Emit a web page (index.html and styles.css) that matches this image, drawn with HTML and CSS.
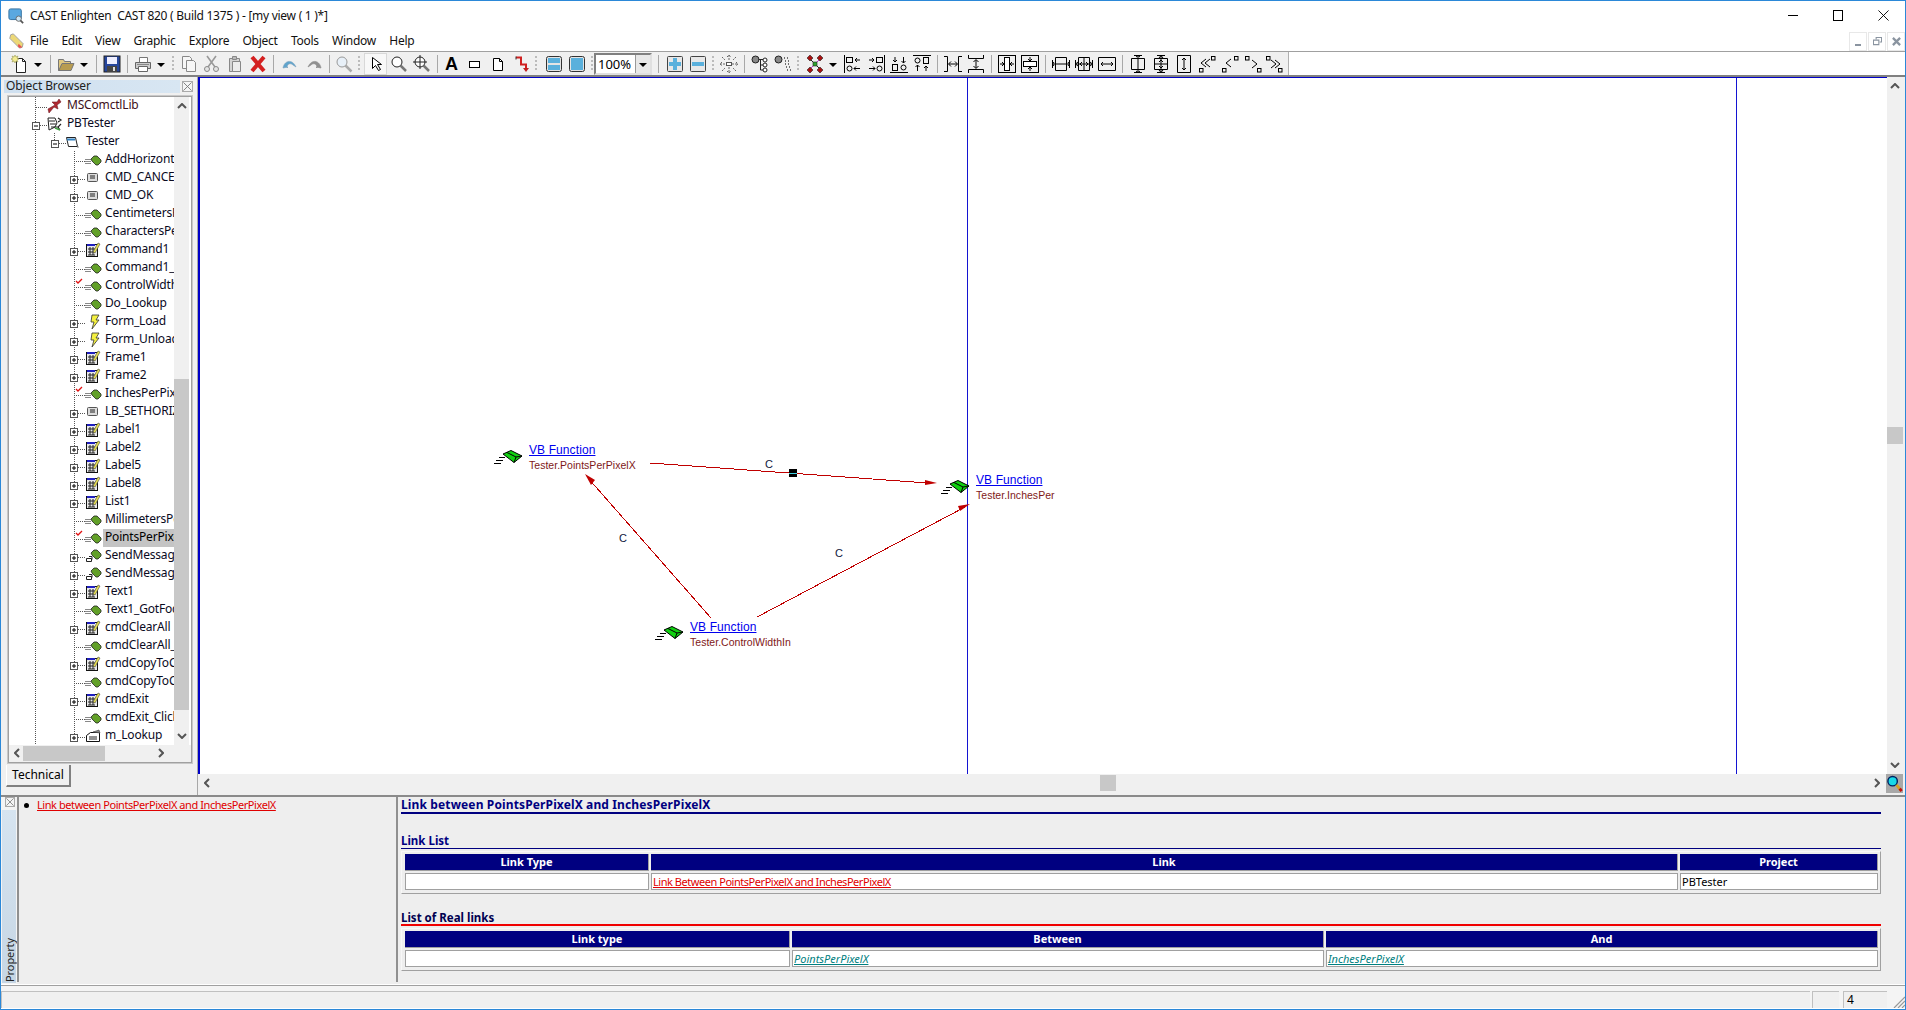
FILE: index.html
```html
<!DOCTYPE html>
<html lang="en">
<head>
<meta charset="utf-8">
<title>CAST Enlighten</title>
<link rel="stylesheet" href="styles.css">
</head>
<body>
<svg class="defs" aria-hidden="true">
  <defs>
    <!-- toolbar icons -->
    <symbol id="new" viewBox="0 0 18 18"><path d="M5.500 3.500h6l3 3v11h-9z" fill="#fff" stroke="#222"/><path d="M11.500 3.500v3h3" fill="none" stroke="#222"/><path d="M4 0l1 2 2-1-1 2 2 1-2 1 1 2-2-1-1 2-1-2-2 1 1-2-2-1 2-1-1-2 2 1z" fill="#f4ec90" stroke="#9a9a50" stroke-width=".6"/></symbol>
    <symbol id="open" viewBox="0 0 18 18"><path d="M1.500 4.500h5l1 2h6v2h-8l-3 7h-1z" fill="#e0c880" stroke="#777"/><path d="M5 8.500h12l-3 7H1.800z" fill="#b89c50" stroke="#777"/></symbol>
    <symbol id="save" viewBox="0 0 18 18"><rect x="1" y="1" width="16" height="16" fill="#26469c" stroke="#222"/><rect x="4" y="2" width="10" height="7" fill="#eef"/><rect x="4" y="11" width="10" height="6" fill="#444"/><rect x="10" y="12" width="2" height="4" fill="#ddd"/></symbol>
    <symbol id="print" viewBox="0 0 18 18"><path d="M5.500 2.500h8v5h-8z" fill="#fff" stroke="#777"/><path d="M1.500 7.500h15v6h-15z" fill="#ccc" stroke="#666"/><path d="M4.500 11.500h9v5h-9z" fill="#fff" stroke="#666"/><path d="M3 9.500h12" stroke="#888"/></symbol>
    <symbol id="copy" viewBox="0 0 18 18"><path d="M2.500 1.500h7l2 2v10h-9z" fill="#f6f6f6" stroke="#888"/><path d="M6.500 5.500h7l2 2v9h-9z" fill="#f6f6f6" stroke="#888"/></symbol>
    <symbol id="cut" viewBox="0 0 18 18"><path d="M4 1l8 11M13 1L5 12" stroke="#999" stroke-width="1.600" fill="none"/><circle cx="4" cy="14" r="2.500" fill="#e4e4e4" stroke="#888"/><circle cx="13" cy="14" r="2.500" fill="#e4e4e4" stroke="#888"/></symbol>
    <symbol id="paste" viewBox="0 0 18 18"><path d="M3.500 3.500h10v13h-10z" fill="#d4d4d4" stroke="#888"/><path d="M6.500 1.500h4v3h-4z" fill="#bbb" stroke="#888"/><path d="M6.500 6.500h8v10h-8z" fill="#ececec" stroke="#888"/></symbol>
    <symbol id="del" viewBox="0 0 18 18"><path d="M3 2l12 14M15 2L3 16" stroke="#d42020" stroke-width="4"/></symbol>
    <symbol id="undo" viewBox="0 0 18 18"><path d="M2 13C3 6 11 3 15 12l-3-2C10 8 6 8 6 13l1-1z" fill="#5fa4cc" stroke="#7aa0bc" stroke-width=".6"/></symbol>
    <symbol id="redo" viewBox="0 0 18 18"><path d="M16 13C15 6 7 3 3 12l3-2c2-2 6-2 6 3l-1-1z" fill="#909090" stroke="#888" stroke-width=".6"/></symbol>
    <symbol id="find" viewBox="0 0 18 18"><circle cx="7" cy="7" r="5" fill="#e8f0f8" stroke="#999"/><path d="M10.500 10.500l6 6" stroke="#aaa" stroke-width="2.500"/></symbol>
    <symbol id="arrow" viewBox="0 0 18 18"><path d="M5.500 2.500v11l3-3 3 5 2-1-3-5h4z" fill="#fff" stroke="#000"/></symbol>
    <symbol id="zoom" viewBox="0 0 18 18"><circle cx="7" cy="7" r="5" fill="#fff" stroke="#222"/><path d="M10.500 10.500l5.500 5.500" stroke="#777" stroke-width="2.500"/></symbol>
    <symbol id="zoomfit" viewBox="0 0 18 18"><circle cx="7" cy="7" r="5" fill="#fff" stroke="#222"/><path d="M7 0v14M0 7h14" stroke="#222"/><path d="M10.500 10.500l5.500 5.500" stroke="#777" stroke-width="2.500"/></symbol>
    <symbol id="rect" viewBox="0 0 18 18"><rect x="3.500" y="6.500" width="10" height="6" fill="#fff" stroke="#000"/></symbol>
    <symbol id="page" viewBox="0 0 18 18"><path d="M4.500 3.500h6l3 3v9h-9z" fill="#fff" stroke="#000"/><path d="M10.500 3.500v3h3" fill="none" stroke="#000"/></symbol>
    <symbol id="redlink" viewBox="0 0 18 18"><path d="M4 2.500h5v7h5v5" fill="none" stroke="#d02020" stroke-width="2"/><path d="M4 1.500v3" stroke="#333"/><path d="M11 13h6l-3 4z" fill="#c02020"/></symbol>
    <symbol id="bars" viewBox="0 0 18 18"><rect x="1.500" y="1.500" width="15" height="15" rx="2" fill="#e4e4e4" stroke="#333"/><rect x="3" y="3" width="12" height="5" fill="#5ab0dc"/><rect x="3" y="10" width="12" height="5" fill="#5ab0dc"/></symbol>
    <symbol id="blue" viewBox="0 0 18 18"><rect x="1.500" y="1.500" width="15" height="15" rx="2" fill="#e4e4e4" stroke="#333"/><rect x="3" y="3" width="12" height="12" fill="#5ab0dc"/></symbol>
    <symbol id="plus" viewBox="0 0 18 18"><rect x="1.500" y="1.500" width="15" height="15" rx="1" fill="#e8e8e8" stroke="#444"/><path d="M9 3v12M3 9h12" stroke="#5ab0dc" stroke-width="4"/></symbol>
    <symbol id="minus" viewBox="0 0 18 18"><rect x="1.500" y="1.500" width="15" height="15" rx="1" fill="#e8e8e8" stroke="#444"/><path d="M3 9h12" stroke="#5ab0dc" stroke-width="4"/></symbol>
    <symbol id="move" viewBox="0 0 18 18"><rect x="6.500" y="7.500" width="5" height="3" fill="#fff" stroke="#555"/><path d="M9 0v6M9 12v6M0 9h6M12 9h6M2 2l3 3M16 2l-3 3M2 16l3-3M16 16l-3-3M7 2l2-2 2 2M7 16l2 2 2-2M2 7L0 9l2 2M16 7l2 2-2 2" fill="none" stroke="#666" stroke-dasharray="2 1"/></symbol>
    <symbol id="tree" viewBox="0 0 18 18"><circle cx="4.500" cy="4.500" r="3.500" fill="#888" stroke="#222"/><circle cx="14" cy="5" r="2" fill="#fff" stroke="#222"/><circle cx="14" cy="10" r="2" fill="#fff" stroke="#222"/><circle cx="14" cy="15" r="2" fill="#fff" stroke="#222"/><path d="M7.500 4.500H12M9.500 4.500v10.500H12M9.500 10H12" fill="none" stroke="#222"/></symbol>
    <symbol id="tree2" viewBox="0 0 18 18"><circle cx="4.500" cy="4.500" r="3.500" fill="#888" stroke="#222"/><path d="M10 3h1M13 3h1M11 6h1M14 6h1M11 9h1M14 9h1M12 12h1M15 12h1M13 15h1M16 15h1" stroke="#444" stroke-width="1.500"/></symbol>
    <symbol id="redx" viewBox="0 0 18 18"><path d="M4 4l10 10" stroke="#222"/><path d="M14 4L4 14" stroke="#c030d0"/><path d="M1 3l3-3 3 3-3 3zM11 3l3-3 3 3-3 3zM1 15l3-3 3 3-3 3zM11 15l3-3 3 3-3 3z" fill="#a81010" stroke="#222" stroke-width=".6"/><rect x="7" y="7" width="4" height="4" fill="#30a030" stroke="#222" stroke-width=".6"/></symbol>
    <symbol id="al" viewBox="0 0 18 18"><g fill="none" stroke="#000"><path d="M.500 0v18"/><rect x="2.500" y="2.500" width="6" height="5"/><path d="M16 5h-5M13 3l-2 2 2 2"/><circle cx="5.500" cy="13.500" r="2.500"/><path d="M16 13.500h-6M12 11.500l-2 2 2 2"/></g></symbol>
    <symbol id="sp" viewBox="0 0 18 18"><g fill="none" stroke="#000"><path d="M0 1.500h3.500v15H0M18 1.500h-3.500v15H18M5 9h8"/><path d="M7 6.500L4.500 9 7 11.500M11 6.500L13.500 9 11 11.500"/></g></symbol>
    <symbol id="ct" viewBox="0 0 18 18"><g fill="none" stroke="#000"><rect x=".5" y=".5" width="17" height="17"/><rect x="6.500" y="2.500" width="5" height="13" fill="#fff"/><path d="M2 9h4M16 9h-4"/><path d="M4 7l2 2-2 2M14 7l-2 2 2 2"/></g></symbol>
    <symbol id="w1" viewBox="0 0 18 18"><g fill="none" stroke="#000"><path d="M.500 5v8M17.500 5v8M3.500 2.500h11v13h-11zM0 9h18"/><path d="M2 7l-1.500 2L2 11M16 7l1.500 2-1.500 2"/></g></symbol>
    <symbol id="w2" viewBox="0 0 18 18"><g fill="none" stroke="#000"><path d="M.500 5v8M17.500 5v8M3.500 2.500h11v13h-11zM0 9h18M9 3v12"/><path d="M3 7L.5 9 3 11M15 7l2.500 2-2.500 2M7 7L5 9l2 2M11 7l2 2-2 2"/></g></symbol>
    <symbol id="w3" viewBox="0 0 18 18"><g fill="none" stroke="#000"><path d="M.500 2.500h17v13H.500zM3 9h12"/><path d="M5 7L3 9l2 2M13 7l2 2-2 2"/></g></symbol>
    <symbol id="dg1" viewBox="0 0 18 18"><g fill="none" stroke="#000"><rect x="1.500" y="13.500" width="3.500" height="3.500"/><rect x="13.500" y="1.500" width="3.500" height="3.500"/><path d="M8 4l-5 4 5 4M12 4L7 8l5 4"/></g></symbol>
    <symbol id="dg2" viewBox="0 0 18 18"><g fill="none" stroke="#000"><rect x="1.500" y="13.500" width="3.500" height="3.500"/><rect x="13.500" y="1.500" width="3.500" height="3.500"/><path d="M10 4L5 8l5 4"/></g></symbol>
    <symbol id="dg3" viewBox="0 0 18 18"><g fill="none" stroke="#000"><rect x="1.500" y="1.500" width="3.500" height="3.500"/><rect x="13.500" y="13.500" width="3.500" height="3.500"/><path d="M8 5l5 4-5 4"/></g></symbol>
    <symbol id="dg4" viewBox="0 0 18 18"><g fill="none" stroke="#000"><rect x="1.500" y="1.500" width="3.500" height="3.500"/><rect x="13.500" y="13.500" width="3.500" height="3.500"/><path d="M6 5l5 4-5 4M10 5l5 4-5 4"/></g></symbol>
    <symbol id="appicon" viewBox="0 0 18 18"><rect x="1" y="1" width="14" height="12" rx="2" fill="#5aa8e0" stroke="#2a6a9c"/><circle cx="12" cy="12" r="3" fill="#cfe6f4" stroke="#666"/><path d="M14 14l3 3" stroke="#555" stroke-width="2"/></symbol>
    <symbol id="pencil" viewBox="0 0 18 18"><path d="M3 2l3-1 11 11-1 4-3 1L2 6z" fill="#ecd878" stroke="#999"/><path d="M12 12l4 4-3 1-2-2z" fill="#e85050"/></symbol>
    <symbol id="mag" viewBox="0 0 18 18"><circle cx="7" cy="6" r="5" fill="#18d8e8" stroke="#002060" stroke-width="1.500"/><path d="M11 10l5 6" stroke="#d8a020" stroke-width="3"/><path d="M14.500 14l2 2.500" stroke="#c01010" stroke-width="3"/></symbol>
    <symbol id="node" viewBox="0 0 29 15"><path d="M5 7.500h6M2 10.500h7M0 13.500h7" stroke="#000"/><path d="M9 4l8-3.500L28 6l-8 6.500z" fill="#10d010" stroke="#000"/><path d="M13 2.500L22 7l-2 5.500M22 7l6-1" fill="none" stroke="#000"/></symbol>

    <!-- tree icons, 36 wide: connector + icon -->
    <symbol id="t-leaf" viewBox="0 0 36 18"><path d="M16 8.500h6M16 10.500h6M16 12.500h6" stroke="#888"/><path d="M22 8l3-3h3l4 4v2l-3 3h-2l-4-4z" fill="#62a028" stroke="#222" stroke-width=".8"/></symbol>
    <symbol id="t-f" viewBox="0 0 36 18"><path d="M5 10.500h11" stroke="#555" stroke-dasharray="1 1"/><use href="#t-leaf"/></symbol>
    <symbol id="t-k" viewBox="0 0 36 18"><path d="M7 4l2 2 4-4" fill="none" stroke="#e01010" stroke-width="1.300"/><use href="#t-f"/></symbol>
    <symbol id="t-p" viewBox="0 0 36 18"><rect x="1.500" y="7.500" width="7" height="7" fill="#fff" stroke="#555"/><path d="M3 11h4M5 9v4" stroke="#000"/><path d="M9 10.500h8" stroke="#555" stroke-dasharray="1 1"/></symbol>
    <symbol id="t-b" viewBox="0 0 36 18"><use href="#t-p"/><rect x="18.500" y="4.500" width="10" height="8" rx="1" fill="#ddd" stroke="#555"/><path d="M21 7h5M21 9h5" stroke="#222"/></symbol>
    <symbol id="t-c" viewBox="0 0 36 18"><use href="#t-p"/><rect x="17.500" y="3.500" width="11" height="12" fill="#e8e8e8" stroke="#111"/><rect x="18" y="3" width="8" height="2" fill="#2020c0"/><path d="M19 8h7M19 11h7M19 14h7M21 6v8M24 6v8" stroke="#222"/><path d="M24 11l5-9 2 1-5 9z" fill="#e8e050" stroke="#444" stroke-width=".6"/></symbol>
    <symbol id="t-z" viewBox="0 0 36 18"><use href="#t-p"/><path d="M23 2h7l-3 5h3l-7 9 2-7h-3z" fill="#f4f040" stroke="#333" stroke-width=".8"/></symbol>
    <symbol id="t-l" viewBox="0 0 36 18"><use href="#t-p"/><path d="M17.500 11.500h5v3h-5zM20 9.500h3v3" fill="#fff" stroke="#222"/><path d="M22 6l3-3h3l4 4v2l-3 3h-2l-4-4z" fill="#62a028" stroke="#222" stroke-width=".8"/></symbol>
    <symbol id="t-m" viewBox="0 0 36 18"><use href="#t-p"/><path d="M17.500 8.500l4-3h9v9h-13z" fill="#fff" stroke="#111"/><path d="M20 10h8M20 12h8" stroke="#222"/><path d="M24 5l6-2 1 3z" fill="#888" stroke="#444" stroke-width=".6"/></symbol>
    <symbol id="t-lib" viewBox="0 0 36 18"><path d="M5 10.500h11" stroke="#555" stroke-dasharray="1 1"/><path d="M17 12l7-4-3-3 5 0 2-3 2 3-4 3 1 4-4-2-5 6z" fill="#b02830" stroke="#702028" stroke-width=".6"/></symbol>
    <symbol id="t-pb" viewBox="0 0 36 18"><rect x="1.500" y="7.500" width="7" height="7" fill="#fff" stroke="#555"/><path d="M3 11h4" stroke="#000"/><path d="M9 10.500h7" stroke="#555" stroke-dasharray="1 1"/><path d="M17 3l7 0 2 5-2 4-6 3z" fill="#fff" stroke="#222"/><path d="M18 6h6M19 9h6M20 12h8M27 3l3 2-3 2M30 9l-3 3 2 3" fill="none" stroke="#222" stroke-width="1.200"/><path d="M24 13l5 2" stroke="#40a040" stroke-width="1.500"/></symbol>
    <symbol id="t-fo" viewBox="0 0 36 18"><rect x="1.500" y="7.500" width="7" height="7" fill="#fff" stroke="#555"/><path d="M3 11h4" stroke="#000"/><path d="M9 10.500h7" stroke="#555" stroke-dasharray="1 1"/><path d="M16.500 4.500h9l2 9h-9z" fill="#fff" stroke="#222"/><path d="M17 6.500h8" stroke="#3080c0" stroke-width="2"/><path d="M27 14h2" stroke="#888"/></symbol>
  </defs>
</svg>

<div class="window">
  <header class="titlebar">
    <svg class="ic16"><use href="#appicon"/></svg>
    <span class="title-text">CAST Enlighten  CAST 820 ( Build 1375 ) - [my view ( 1 )*]</span>
    <div class="caption">
      <span class="cap-min"></span>
      <span class="cap-max"></span>
      <svg class="cap-x" viewBox="0 0 12 12"><path d="M.5.5l11 11M11.500.5l-11 11" stroke="#000"/></svg>
    </div>
  </header>

  <nav class="menubar">
    <svg class="ic16"><use href="#pencil"/></svg>
    <ul class="menu">
      <li>File</li><li>Edit</li><li>View</li><li>Graphic</li><li>Explore</li><li>Object</li><li>Tools</li><li>Window</li><li>Help</li>
    </ul>
    <div class="mdi">
      <span class="mdi-btn"><i class="mdi-min"></i></span>
      <span class="mdi-btn"><svg viewBox="0 0 10 10"><path d="M3.500 2.500v-2h6v5h-2M.5 3.500h6v5h-6z" fill="none" stroke="#8a94a0" stroke-width="1.200"/></svg></span>
      <span class="mdi-btn"><svg viewBox="0 0 10 10"><path d="M1 1l8 8M9 1l-8 8" stroke="#8a94a0" stroke-width="2.500"/></svg></span>
    </div>
  </nav>

  <div class="toolbar-row">
    <div class="toolbar">
      <span class="t"><svg><use href="#new"/></svg></span><span class="c"></span><span class="s"></span>
      <span class="t"><svg><use href="#open"/></svg></span><span class="c"></span><span class="s"></span>
      <span class="t"><svg><use href="#save"/></svg></span><span class="s"></span>
      <span class="t"><svg><use href="#print"/></svg></span><span class="c"></span><span class="g"></span>
      <span class="t"><svg><use href="#copy"/></svg></span>
      <span class="t"><svg><use href="#cut"/></svg></span>
      <span class="t"><svg><use href="#paste"/></svg></span>
      <span class="t"><svg><use href="#del"/></svg></span><span class="s"></span>
      <span class="t wide"><svg><use href="#undo"/></svg></span>
      <span class="t"><svg><use href="#redo"/></svg></span><span class="s s7"></span>
      <span class="t"><svg><use href="#find"/></svg></span><span class="g g9"></span>
      <span class="t on"><svg><use href="#arrow"/></svg></span>
      <span class="t"><svg><use href="#zoom"/></svg></span>
      <span class="t"><svg><use href="#zoomfit"/></svg></span><span class="s s7"></span>
      <span class="t"><span class="glyph-a">A</span></span>
      <span class="t"><svg><use href="#rect"/></svg></span>
      <span class="t"><svg><use href="#page"/></svg></span>
      <span class="t"><svg><use href="#redlink"/></svg></span><span class="g g10"></span>
      <span class="t"><svg><use href="#bars"/></svg></span>
      <span class="t"><svg><use href="#blue"/></svg></span><span class="g g7"></span>
      <span class="combo"><span class="combo-val">100%</span><span class="combo-btn"></span></span><span class="s s10"></span>
      <span class="t"><svg><use href="#plus"/></svg></span>
      <span class="t"><svg><use href="#minus"/></svg></span><span class="g"></span>
      <span class="t"><svg><use href="#move"/></svg></span><span class="s"></span>
      <span class="t"><svg><use href="#tree"/></svg></span>
      <span class="t"><svg><use href="#tree2"/></svg></span><span class="g g9"></span>
      <span class="t"><svg><use href="#redx"/></svg></span><span class="c"></span>
      <span class="t"><svg><use href="#al"/></svg></span>
      <span class="t"><svg class="fx"><use href="#al"/></svg></span>
      <span class="t"><svg class="rm"><use href="#al"/></svg></span>
      <span class="t"><svg class="rp"><use href="#al"/></svg></span><span class="s"></span>
      <span class="t"><svg><use href="#sp"/></svg></span>
      <span class="t"><svg class="rp"><use href="#sp"/></svg></span><span class="s"></span>
      <span class="t"><svg><use href="#ct"/></svg></span>
      <span class="t"><svg class="rp"><use href="#ct"/></svg></span><span class="s"></span>
      <span class="t"><svg><use href="#w1"/></svg></span>
      <span class="t"><svg><use href="#w2"/></svg></span>
      <span class="t"><svg><use href="#w3"/></svg></span><span class="s"></span>
      <span class="t"><svg class="rp"><use href="#w1"/></svg></span>
      <span class="t"><svg class="rp"><use href="#w2"/></svg></span>
      <span class="t"><svg class="rp"><use href="#w3"/></svg></span>
      <span class="t"><svg><use href="#dg1"/></svg></span>
      <span class="t"><svg><use href="#dg2"/></svg></span>
      <span class="t"><svg><use href="#dg3"/></svg></span>
      <span class="t tn"><svg><use href="#dg4"/></svg></span>
    </div>
  </div>

  <div class="main">
    <aside class="browser">
      <div class="dock-head">
        <span class="dock-title">Object Browser</span>
        <span class="dock-close"><svg viewBox="0 0 10 10"><path d="M.5.5l9 9M9.500.5l-9 9" stroke="#777"/></svg></span>
      </div>
      <div class="tree-box">
        <div class="tree-top">
          <div class="tree">
            <i class="guide g-a"></i><i class="guide g-b"></i><i class="guide g-c"></i>
            <div class="row l0"><svg><use href="#t-lib"/></svg><span class="maroon">MSComctlLib</span></div>
            <div class="row l0"><svg><use href="#t-pb"/></svg><span>PBTester</span></div>
            <div class="row l1"><svg><use href="#t-fo"/></svg><span>Tester</span></div>
            <div class="row"><svg><use href="#t-f"/></svg><span>AddHorizontalExtent</span></div>
            <div class="row"><svg><use href="#t-b"/></svg><span>CMD_CANCEL</span></div>
            <div class="row"><svg><use href="#t-b"/></svg><span>CMD_OK</span></div>
            <div class="row"><svg><use href="#t-f"/></svg><span>CentimetersPerPixelX</span></div>
            <div class="row"><svg><use href="#t-f"/></svg><span>CharactersPerPixel</span></div>
            <div class="row"><svg><use href="#t-c"/></svg><span>Command1</span></div>
            <div class="row"><svg><use href="#t-f"/></svg><span>Command1_Click</span></div>
            <div class="row"><svg><use href="#t-k"/></svg><span>ControlWidthIn</span></div>
            <div class="row"><svg><use href="#t-f"/></svg><span>Do_Lookup</span></div>
            <div class="row"><svg><use href="#t-z"/></svg><span>Form_Load</span></div>
            <div class="row"><svg><use href="#t-z"/></svg><span>Form_Unload</span></div>
            <div class="row"><svg><use href="#t-c"/></svg><span>Frame1</span></div>
            <div class="row"><svg><use href="#t-c"/></svg><span>Frame2</span></div>
            <div class="row"><svg><use href="#t-k"/></svg><span>InchesPerPixelX</span></div>
            <div class="row"><svg><use href="#t-b"/></svg><span>LB_SETHORIZONTAL</span></div>
            <div class="row"><svg><use href="#t-c"/></svg><span>Label1</span></div>
            <div class="row"><svg><use href="#t-c"/></svg><span>Label2</span></div>
            <div class="row"><svg><use href="#t-c"/></svg><span>Label5</span></div>
            <div class="row"><svg><use href="#t-c"/></svg><span>Label8</span></div>
            <div class="row"><svg><use href="#t-c"/></svg><span>List1</span></div>
            <div class="row"><svg><use href="#t-f"/></svg><span>MillimetersPerPixel</span></div>
            <div class="row sel"><svg><use href="#t-k"/></svg><span>PointsPerPixelX</span></div>
            <div class="row"><svg><use href="#t-l"/></svg><span>SendMessageLong</span></div>
            <div class="row"><svg><use href="#t-l"/></svg><span>SendMessageByNum</span></div>
            <div class="row"><svg><use href="#t-c"/></svg><span>Text1</span></div>
            <div class="row"><svg><use href="#t-f"/></svg><span>Text1_GotFocus</span></div>
            <div class="row"><svg><use href="#t-c"/></svg><span>cmdClearAll</span></div>
            <div class="row"><svg><use href="#t-f"/></svg><span>cmdClearAll_Click</span></div>
            <div class="row"><svg><use href="#t-c"/></svg><span>cmdCopyToClip</span></div>
            <div class="row"><svg><use href="#t-f"/></svg><span>cmdCopyToClip_Click</span></div>
            <div class="row"><svg><use href="#t-c"/></svg><span>cmdExit</span></div>
            <div class="row"><svg><use href="#t-f"/></svg><span>cmdExit_Click</span></div>
            <div class="row"><svg><use href="#t-m"/></svg><span>m_Lookup</span></div>
          </div>
          <div class="vbar">
            <svg class="chev" viewBox="0 0 10 6"><path d="M1 5l4-4 4 4" fill="none" stroke="#555" stroke-width="2"/></svg>
            <div class="vbar-track"><div class="vbar-thumb"></div></div>
            <svg class="chev" viewBox="0 0 10 6"><path d="M1 1l4 4 4-4" fill="none" stroke="#555" stroke-width="2"/></svg>
          </div>
        </div>
        <div class="hbar">
          <svg class="chev-s" viewBox="0 0 6 10"><path d="M5 1L1 5l4 4" fill="none" stroke="#555" stroke-width="2"/></svg>
          <div class="hbar-thumb"></div>
          <svg class="chev-s end" viewBox="0 0 6 10"><path d="M1 1l4 4-4 4" fill="none" stroke="#555" stroke-width="2"/></svg>
        </div>
      </div>
      <div class="tabs"><span class="tab">Technical</span></div>
    </aside>

    <section class="work">
      <div class="work-top">
        <div class="canvas">
          <i class="vline v1"></i><i class="vline v2"></i>
          <svg class="edges" viewBox="200 78 1687 696">
            <g fill="none" stroke="#c00000" shape-rendering="crispEdges">
              <path d="M650 463L928 483"/>
              <path d="M711 618L588 478"/>
              <path d="M757 617L965 507"/>
            </g>
            <g fill="#c00000">
              <path d="M937 483l-12-3v5z"/>
              <path d="M585 474l10 6-4 5z"/>
              <path d="M970 504l-12 2 2 5z"/>
            </g>
            <rect x="789" y="469" width="8" height="8" fill="#000"/>
            <path d="M789 473.500h8" stroke="#40d0e0"/>
            <use href="#node" x="494" y="450" width="29" height="15"/>
            <use href="#node" x="941" y="480" width="29" height="15"/>
            <use href="#node" x="655" y="626" width="29" height="15"/>
          </svg>
          <span class="clabel c1">C</span>
          <span class="clabel c2">C</span>
          <span class="clabel c3">C</span>
          <div class="node n1"><a>VB Function</a><span>Tester.PointsPerPixelX</span></div>
          <div class="node n2"><a>VB Function</a><span>Tester.InchesPer</span></div>
          <div class="node n3"><a>VB Function</a><span>Tester.ControlWidthIn</span></div>
        </div>
        <div class="canvas-vbar">
          <svg class="chev" viewBox="0 0 10 6"><path d="M1 5l4-4 4 4" fill="none" stroke="#555" stroke-width="2"/></svg>
          <div class="cv-track"><div class="cv-thumb"></div></div>
          <svg class="chev" viewBox="0 0 10 6"><path d="M1 1l4 4 4-4" fill="none" stroke="#555" stroke-width="2"/></svg>
        </div>
      </div>
      <div class="canvas-hbar">
        <svg class="chev-s" viewBox="0 0 6 10"><path d="M5 1L1 5l4 4" fill="none" stroke="#555" stroke-width="2"/></svg>
        <div class="ch-track"><div class="ch-thumb"></div></div>
        <svg class="chev-s" viewBox="0 0 6 10"><path d="M1 1l4 4-4 4" fill="none" stroke="#555" stroke-width="2"/></svg>
        <span class="magbox"><svg><use href="#mag"/></svg></span>
      </div>
    </section>
  </div>

  <section class="bottom">
    <div class="side">
      <span class="side-close"><svg viewBox="0 0 10 10"><path d="M.5.5l9 9M9.500.5l-9 9" stroke="#777"/></svg></span>
      <div class="side-tab"><span>Property</span></div>
    </div>
    <div class="links">
      <ul><li><a>Link between PointsPerPixelX and InchesPerPixelX</a></li></ul>
    </div>
    <div class="detail">
      <h1>Link between PointsPerPixelX and InchesPerPixelX</h1>
      <h2 class="lh-a">Link List</h2>
      <div class="tbl t3">
        <div class="th">Link Type</div><div class="th">Link</div><div class="th">Project</div>
        <div class="td"></div><div class="td"><a class="red">Link Between PointsPerPixelX and InchesPerPixelX</a></div><div class="td">PBTester</div>
      </div>
      <h2 class="lh-b">List of Real links</h2>
      <div class="tbl t2">
        <div class="th">Link type</div><div class="th">Between</div><div class="th">And</div>
        <div class="td"></div><div class="td"><a class="teal">PointsPerPixelX</a></div><div class="td"><a class="teal">InchesPerPixelX</a></div>
      </div>
    </div>
  </section>

  <footer class="status">
    <span class="st st-main"></span>
    <span class="st st-a"></span>
    <span class="st st-b">4</span>
    <svg class="grip" viewBox="0 0 12 12"><path d="M12 1L1 12M12 5L5 12M12 9l-3 3" stroke="#999" stroke-width="1.200"/></svg>
  </footer>
</div>
</body>
</html>
```

FILE: styles.css
```css
* { box-sizing: border-box; }
html, body { margin: 0; padding: 0; height: 100%; overflow: hidden; background: #fff; }
body { font-family: "Noto Sans", "Liberation Sans", sans-serif; font-size: 12px; color: #000; }
.defs { position: absolute; width: 0; height: 0; }
svg { display: block; }

.window { width: 1906px; height: 1010px; border: 1px solid #2b88d8; display: flex; flex-direction: column; background: #fff; }

/* title bar */
.titlebar { height: 29px; display: flex; align-items: center; padding-left: 7px; flex: none; }
.ic16 { width: 16px; height: 16px; flex: none; }
.title-text { margin-left: 6px; white-space: pre; letter-spacing: -.27px; color: #111; line-height: 16px; }
.caption { margin-left: auto; display: flex; align-items: center; height: 100%; }
.cap-min { width: 10px; height: 1px; background: #000; margin-right: 35px; }
.cap-max { width: 10px; height: 11px; border: 1px solid #000; margin-right: 35px; }
.cap-x { width: 11px; height: 11px; margin-right: 16px; }

/* menu */
.menubar { height: 21px; flex: none; display: flex; align-items: center; padding-left: 7px; }
.menu { list-style: none; display: flex; gap: 13.200px; margin: 0 0 0 6px; padding: 0; color: #111; letter-spacing: -.25px; }
.mdi { margin-left: auto; display: flex; gap: 1px; align-self: flex-end; margin-right: 0; }
.mdi-btn { width: 18px; height: 19px; border: 1px solid #e8e8e8; display: flex; align-items: center; justify-content: center; }
.mdi-btn svg { width: 9px; height: 9px; }
.mdi-min { display: block; width: 6px; height: 2px; background: #8a94a0; margin-top: 7px; }

/* toolbar */
.toolbar-row { height: 26px; flex: none; border-top: 1px solid #a0a0a0; border-bottom: 2px solid #808080; background: #fff; }
.toolbar { width: 1288px; height: 23px; background: #f0f0f0; border-right: 1px solid #b0b0b0; display: flex; align-items: center; padding-left: 7px; }
.t { width: 23px; height: 22px; flex: none; display: flex; align-items: center; justify-content: center; }
.t svg { width: 18px; height: 18px; }
.t.wide { width: 25px; }
.t.tn { width: 20px; }
.t.on { background: #f8f8f8; box-shadow: inset 0 0 0 1px #d8d8d8; }
.c { width: 15px; height: 22px; flex: none; position: relative; }
.c::after { content: ""; position: absolute; left: 3px; top: 10px; border-left: 4px solid transparent; border-right: 4px solid transparent; border-top: 4px solid #000; }
.s { width: 8px; height: 20px; flex: none; position: relative; }
.s::after { content: ""; position: absolute; left: 4px; top: 1px; bottom: 1px; width: 1px; background: #a8a8a8; }
.s7 { width: 7px; }
.s10 { width: 11px; }
.s10::after { left: 6px; }
.g { width: 8px; height: 20px; flex: none; position: relative; }
.g::after { content: ""; position: absolute; left: 3px; top: 2px; bottom: 2px; width: 2px; background: repeating-linear-gradient(#bbb 0 2px, transparent 2px 4px); }
.g7 { width: 6px; }
.g9 { width: 9px; }
.g10 { width: 10px; }
.fx { transform: scaleX(-1); }
.rp { transform: rotate(90deg); }
.rm { transform: rotate(-90deg); }
.glyph-a { font: bold 18px/18px "Liberation Sans", sans-serif; }
.combo { width: 58px; height: 22px; flex: none; display: flex; border: 2px solid; border-color: #808080 #e0e0e0 #e0e0e0 #808080; background: #fff; }
.combo-val { flex: 1; font-size: 13px; line-height: 18px; padding-left: 2px; }
.combo-btn { width: 15px; background: #e8e8e8; border-left: 1px solid #999; position: relative; }
.combo-btn::after { content: ""; position: absolute; left: 3px; top: 8px; border-left: 4px solid transparent; border-right: 4px solid transparent; border-top: 4px solid #000; }

/* main */
.main { height: 718px; flex: none; display: flex; }
.browser { width: 196px; flex: none; background: #f0f0f0; display: flex; flex-direction: column; border-bottom: 0; }
.dock-head { height: 18px; flex: none; display: flex; align-items: center; padding: 2px 3px 2px 3px; }
.dock-title { width: 176px; height: 13px; line-height: 11px; background: linear-gradient(90deg, #cfe0f0, #d8e6f2); font-size: 12px; padding-left: 2px; white-space: nowrap; color: #222; letter-spacing: -.1px; }
.dock-close { width: 11px; height: 11px; margin-left: 2px; border: 1px solid #aaa; background: #f4f4f4; }
.dock-close svg { width: 9px; height: 9px; }
.tree-box { margin-left: 6px; width: 186px; height: 669px; flex: none; border: 2px solid #a0a0a0; outline: 1px solid #c8c8c8; outline-offset: -1px; background: #f0f0f0; }
.tree-top { display: flex; background: #fff; height: 648px; }
.tree { width: 165px; flex: none; overflow: hidden; position: relative; background: #fff; }
.guide { position: absolute; width: 1px; background: repeating-linear-gradient(#555 0 1px, transparent 1px 2px); }
.g-a { left: 26px; top: 0; bottom: 0; }
.g-b { left: 45px; top: 36px; height: 14px; }
.g-c { left: 65px; top: 54px; bottom: 8px; }
.row { height: 18px; display: flex; padding-left: 60px; white-space: nowrap; position: relative; line-height: 16px; letter-spacing: -.18px; }
.row.l0 { padding-left: 22px; }
.row.l1 { padding-left: 41px; }
.row svg { width: 36px; height: 18px; flex: none; }
.row span { flex: 1; min-width: 0; overflow: hidden; padding-left: 2px; margin-left: -2px; color: #0a0a1e; }
.row span.maroon { color: #401020; }
.row.sel span { background: #c4c4c4; color: #000; }
.vbar { width: 15px; flex: none; background: #f0f0f0; display: flex; flex-direction: column; align-items: center; }
.chev { width: 10px; height: 6px; margin: 6px 0; flex: none; }
.vbar-track { flex: 1; width: 100%; position: relative; }
.vbar-thumb { position: absolute; left: 0; right: 0; top: 264px; height: 331px; background: #c8c8c8; }
.hbar { height: 16px; display: flex; align-items: center; position: relative; background: #f0f0f0; }
.chev-s { width: 6px; height: 10px; flex: none; }
.hbar .chev-s { margin-left: 5px; }
.hbar .chev-s.end { margin-left: 53px; }
.hbar-thumb { width: 82px; height: 15px; background: #c8c8c8; margin-left: 3px; }
.tabs { height: 23px; margin-top: 1px; flex: none; padding-left: 5px; }
.tab { display: block; width: 65px; height: 22px; background: #f0f0f0; border: 1px solid #a0a0a0; border-top: 0; border-left-color: #fff; border-right: 2px solid #808080; border-bottom: 2px solid #808080; line-height: 20px; text-align: center; font-size: 12px; letter-spacing: 0; }

.work { flex: 1; min-width: 0; display: flex; flex-direction: column; border-left: 1px solid #a8a8a8; background: #f0f0f0; }
.work-top { height: 697px; flex: none; display: flex; }
.canvas { width: 1689px; flex: none; position: relative; background: #fff; border-left: 2px solid #0000c8; border-top: 1px solid #0000c8; overflow: hidden; }
.vline { position: absolute; top: 0; bottom: 0; width: 1px; background: #1414d2; }
.v1 { left: 767px; }
.v2 { left: 1536px; }
.edges { position: absolute; left: 0; top: 0; width: 1687px; height: 696px; }
.clabel { position: absolute; font: 11px/12px "Liberation Sans", sans-serif; color: #102040; }
.c1 { left: 565px; top: 380px; }
.c2 { left: 419px; top: 454px; }
.c3 { left: 635px; top: 469px; }
.node { position: absolute; display: flex; flex-direction: column; font-family: "Liberation Sans", sans-serif; white-space: nowrap; }
.node a { font-size: 12px; line-height: 15px; color: #0000ee; text-decoration: underline; letter-spacing: .1px; }
.node span { font-size: 10.500px; line-height: 15px; color: #801818; letter-spacing: .02px; }
.n1 { left: 329px; top: 365px; }
.n2 { left: 776px; top: 395px; }
.n3 { left: 490px; top: 542px; }
.canvas-vbar { width: 16px; flex: none; background: #f0f0f0; display: flex; flex-direction: column; align-items: center; }
.cv-track { flex: 1; width: 100%; position: relative; }
.cv-thumb { position: absolute; left: 0; right: 0; top: 332px; height: 17px; background: #c8c8c8; }
.canvas-hbar { height: 17px; flex: none; display: flex; align-items: center; padding-left: 6px; }
.ch-track { width: 1656px; flex: none; height: 16px; margin: 0 4px; position: relative; }
.ch-thumb { position: absolute; left: 886px; width: 16px; top: 0; bottom: 0; background: #c8c8c8; }
.magbox { width: 17px; height: 19px; flex: none; margin-left: 6px; background: #a8a8a8; display: flex; align-items: center; justify-content: center; align-self: flex-start; }
.magbox svg { width: 17px; height: 18px; }

/* bottom */
.bottom { height: 189px; flex: none; display: flex; border-top: 2px solid #8a8a8a; background: #eee; }
.side { width: 16px; flex: none; display: flex; flex-direction: column; background: #f4f4f4; }
.side-close { width: 10px; height: 10px; margin: 0 0 0 4px; border: 1px solid #aaa; flex: none; }
.side-close svg { width: 8px; height: 8px; }
.side-tab { flex: 1; margin: 3px 1px 1px 1px; background: linear-gradient(#d6e4f0, #c6d6e4); display: flex; align-items: flex-end; justify-content: center; }
.side-tab span { writing-mode: vertical-rl; transform: rotate(180deg); font-size: 11px; line-height: 13px; margin-bottom: 1px; color: #222; letter-spacing: -.1px; }
.links { width: 379px; flex: none; border-left: 2px solid #909090; background: #eee; margin-bottom: 2px; }
.links ul { margin: 0; padding: 1px 0 0 18px; list-style: none; }
.links li { position: relative; font-size: 11px; line-height: 14px; white-space: nowrap; letter-spacing: -.43px; }
.links li::before { content: ""; position: absolute; left: -13px; top: 5px; width: 5px; height: 5px; border-radius: 50%; background: #000; }
.links a { color: #e00000; text-decoration: underline; }
.detail { flex: 1; min-width: 0; border-left: 2px solid #909090; padding: 0 24px 0 3px; margin-bottom: 2px; }
h1 { margin: 0; height: 17px; border-bottom: 2px solid #000080; font-size: 12px; line-height: 15px; font-weight: 700; color: #000080; white-space: nowrap; letter-spacing: .13px; }
h2 { margin: 0; font-size: 11.500px; font-weight: 700; line-height: 14px; white-space: nowrap; }
.lh-a { margin-top: 20px; height: 15px; border-bottom: 1px solid #000080; color: #000080; }
.lh-b { margin-top: 17px; height: 15px; border-bottom: 2px solid #f00000; color: #000050; }
.tbl { margin-top: 2px; height: 43px; display: grid; grid-template-rows: 17px 17px; gap: 2px; padding: 2px 2px 3px 3px; border: 1px solid; border-color: #f8f8f8 #a0a0a0 #a0a0a0 #f8f8f8; }
.t3 { grid-template-columns: 244px 1027px 198px; }
.t2 { grid-template-columns: 385px 532px 552px; }
.th { background: #000080; color: #fff; font-weight: 700; font-size: 11px; line-height: 16px; text-align: center; border-right: 1px solid #a0a0a0; border-bottom: 1px solid #a0a0a0; }
.td { background: #fff; border: 1px solid #a0a0a0; font-size: 11px; line-height: 15px; padding-left: 1px; white-space: nowrap; overflow: hidden; letter-spacing: 0; }
.td .red { letter-spacing: -.46px; }
.red { color: #e00000; text-decoration: underline; }
.teal { color: #008080; text-decoration: underline; font-style: italic; }

/* status */
.status { height: 23px; flex: none; display: flex; align-items: flex-end; background: #f4f4f4; border-top: 1px solid #a0a0a0; margin-top: 1px; }
.st { height: 17px; background: #f0f0f0; border-top: 1px solid #c0c0c0; border-left: 1px solid #c0c0c0; font-size: 12px; line-height: 16px; }
.st-main { width: 1809px; }
.st-a { width: 27px; margin-left: 2px; }
.st-b { width: 44px; margin-left: 4px; padding-left: 3px; }
.grip { width: 12px; height: 12px; margin-left: 6px; }
```
